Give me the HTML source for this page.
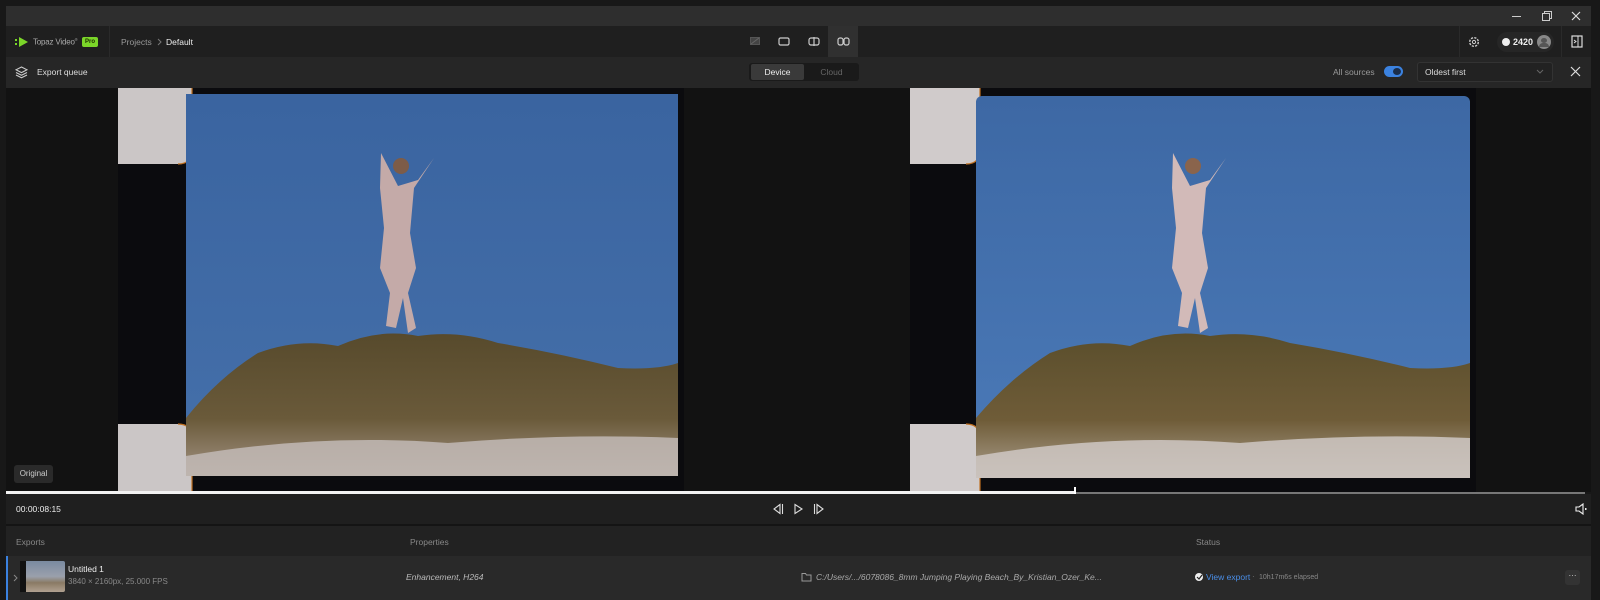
<!DOCTYPE html>
<html><head><meta charset="utf-8"><style>
*{margin:0;padding:0;box-sizing:border-box}
body{width:1600px;height:600px;background:#181818;font-family:"Liberation Sans",sans-serif;color:#ddd;position:relative;overflow:hidden;font-size:9px}
.a{position:absolute}
svg{display:block}
</style></head><body>
<div class="a" style="left:6px;top:6px;width:1585px;height:20px;background:#2e2e2e"></div>
<div class="a" style="left:1512px;top:16px;width:9px;height:1px;background:#ccc"></div>
<svg class="a" style="left:1542px;top:11px" width="10" height="10"><rect x="0.5" y="2.5" width="7" height="7" fill="none" stroke="#ccc"/><path d="M2.5 2.5V0.5H9.5V7.5H7.5" fill="none" stroke="#ccc"/></svg>
<svg class="a" style="left:1571px;top:11px" width="10" height="10"><path d="M1 1L9 9M9 1L1 9" stroke="#ddd" stroke-width="1.2"/></svg>
<div class="a" style="left:6px;top:26px;width:1585px;height:31px;background:#1f1f1f"></div>
<div class="a" style="left:109px;top:26px;width:1px;height:31px;background:#2a2a2a"></div>
<svg class="a" style="left:15px;top:36px" width="14" height="12"><rect x="0" y="3" width="2" height="2" fill="#7bd629"/><rect x="0" y="7" width="2" height="2" fill="#7bd629"/><path d="M4 1L13 6L4 11Z" fill="#7bd629"/></svg>
<div class="a" style="left:33px;top:37px;font-size:8px;letter-spacing:-0.2px;color:#aaa">Topaz Video<sup style="font-size:4px">®</sup></div>
<div class="a" style="left:82px;top:37px;width:16px;height:10px;background:#7bd629;border-radius:2px;color:#1a2a00;font-size:6px;font-weight:bold;text-align:center;line-height:10px">Pro</div>
<div class="a" style="left:121px;top:37px;font-size:8.5px;color:#999">Projects</div>
<svg class="a" style="left:157px;top:38px" width="6" height="8"><path d="M1 1L4 4L1 7" fill="none" stroke="#777"/></svg>
<div class="a" style="left:166px;top:37px;font-size:8.5px;color:#eee">Default</div>
<div class="a" style="left:828px;top:26px;width:30px;height:31px;background:#303030"></div>
<svg class="a" style="left:749px;top:36px" width="12" height="10"><rect x="1.5" y="1.5" width="9" height="7" fill="#444" stroke="#555"/><path d="M2 8L10 2" stroke="#666"/></svg>
<svg class="a" style="left:778px;top:36px" width="12" height="10"><rect x="1" y="2" width="10" height="7" rx="1.5" fill="none" stroke="#ccc" stroke-width="1.2"/></svg>
<svg class="a" style="left:808px;top:36px" width="12" height="10"><rect x="1" y="2" width="10" height="7" rx="2" fill="none" stroke="#ccc" stroke-width="1.2"/><path d="M6 1V10" stroke="#ccc" stroke-width="1.2"/></svg>
<svg class="a" style="left:837px;top:36px" width="13" height="10"><rect x="1" y="2" width="5" height="7" rx="2" fill="none" stroke="#ccc" stroke-width="1.2"/><rect x="7" y="2" width="5" height="7" rx="2" fill="none" stroke="#ccc" stroke-width="1.2"/></svg>
<div class="a" style="left:1459px;top:26px;width:1px;height:31px;background:#2a2a2a"></div>
<div class="a" style="left:1561px;top:26px;width:1px;height:31px;background:#2a2a2a"></div>
<svg class="a" style="left:1468px;top:36px" width="12" height="12"><circle cx="6" cy="6" r="4.3" fill="none" stroke="#ccc" stroke-width="1.4" stroke-dasharray="2.2 1.2"/><circle cx="6" cy="6" r="1.6" fill="none" stroke="#ccc"/></svg>
<div class="a" style="left:1497px;top:32px;width:57px;height:20px;background:#262626;border-radius:10px"></div>
<div class="a" style="left:1502px;top:38px;width:8px;height:8px;border-radius:50%;background:#eee"></div>
<div class="a" style="left:1513px;top:37px;font-size:9px;font-weight:bold;color:#eee">2420</div>
<div class="a" style="left:1537px;top:35px;width:14px;height:14px;border-radius:50%;background:#888"></div>
<div class="a" style="left:1541px;top:38px;width:6px;height:5px;border-radius:50%;background:#555"></div>
<div class="a" style="left:1539px;top:43px;width:10px;height:4px;border-radius:4px 4px 0 0;background:#555"></div>
<svg class="a" style="left:1571px;top:35px" width="12" height="13"><rect x="1" y="1" width="10" height="11" fill="none" stroke="#ddd" stroke-width="1.2"/><path d="M7 1V12M3 5L5 6.5L3 8" fill="none" stroke="#ddd"/></svg>
<div class="a" style="left:6px;top:57px;width:1585px;height:31px;background:#262626"></div>
<svg class="a" style="left:15px;top:66px" width="13" height="13"><path d="M6.5 1L12 3.8L6.5 6.6L1 3.8Z M1 6.5L6.5 9.3L12 6.5 M1 9L6.5 11.8L12 9" fill="none" stroke="#ccc" stroke-width="1.1"/></svg>
<div class="a" style="left:37px;top:67px;font-size:8.5px;color:#ddd">Export queue</div>
<div class="a" style="left:749px;top:63px;width:110px;height:18px;background:#1a1a1a;border-radius:3px"></div>
<div class="a" style="left:751px;top:64px;width:53px;height:16px;background:#3a3a3a;border-radius:2px;font-size:8.5px;color:#eee;text-align:center;line-height:16px">Device</div>
<div class="a" style="left:805px;top:64px;width:53px;height:16px;font-size:8.5px;color:#666;text-align:center;line-height:16px">Cloud</div>
<div class="a" style="left:1333px;top:67px;font-size:8.5px;color:#999">All sources</div>
<div class="a" style="left:1384px;top:66px;width:19px;height:11px;border-radius:6px;background:#3b82e0"></div>
<div class="a" style="left:1393px;top:68px;width:8px;height:7px;border-radius:50%;background:#1a2d4a"></div>
<div class="a" style="left:1417px;top:62px;width:136px;height:20px;border:1px solid #333;background:#222;border-radius:3px"></div>
<div class="a" style="left:1425px;top:67px;font-size:8.5px;color:#ddd">Oldest first</div>
<svg class="a" style="left:1536px;top:69px" width="8" height="6"><path d="M1 1L4 4L7 1" fill="none" stroke="#666"/></svg>
<svg class="a" style="left:1570px;top:66px" width="11" height="11"><path d="M1 1L10 10M10 1L1 10" stroke="#ddd" stroke-width="1.2"/></svg>
<div class="a" style="left:6px;top:88px;width:1585px;height:404px;background:#121212"></div>
<svg class="a" style="left:118px;top:88px" width="570" height="404" viewBox="0 0 570 404">
<defs><linearGradient id="s1" x1="0" y1="0" x2="0" y2="1"><stop offset="0" stop-color="#3a64a0"/><stop offset="1" stop-color="#4570aa"/></linearGradient>
<linearGradient id="m1" x1="0" y1="0" x2="0" y2="1"><stop offset="0" stop-color="#574a2c"/><stop offset=".6" stop-color="#6a5a3a"/><stop offset="1" stop-color="#a49484"/></linearGradient></defs>
<rect x="0" y="0" width="566" height="404" fill="#0b0b0e"/>
<path d="M0 0H74V62Q74 76 60 76H0Z" fill="#cbc6c6"/><path d="M74 0V62Q74 76 60 76" fill="none" stroke="#c07020" stroke-width="1.2"/>
<path d="M0 404V336H60Q74 336 74 350V404Z" fill="#cbc6c6"/><path d="M60 336Q74 336 74 350V404" fill="none" stroke="#c07020" stroke-width="1.2"/>
<rect x="68" y="6" width="492" height="382" fill="url(#s1)"/>
<path d="M68 330Q100 290 140 265Q180 250 220 258Q260 240 300 248Q340 242 380 255Q440 265 500 280Q540 282 560 275V388H68Z" fill="url(#m1)"/>
<path d="M68 368Q200 345 330 355Q450 345 560 350V388H68Z" fill="#c2bab6" opacity=".85"/>
<path d="M263 65L280 98L300 92L316 70L296 100L292 145L298 180L290 205L298 240L290 245L285 210L278 240L268 238L272 205L262 180L266 140L262 100Z" fill="#c4aaa8"/>
<circle cx="283" cy="78" r="8" fill="#7d5c48"/>
</svg>
<svg class="a" style="left:910px;top:88px" width="570" height="404" viewBox="0 0 570 404">
<defs><linearGradient id="s2" x1="0" y1="0" x2="0" y2="1"><stop offset="0" stop-color="#3d68a4"/><stop offset="1" stop-color="#4b7ab8"/></linearGradient>
<linearGradient id="m2" x1="0" y1="0" x2="0" y2="1"><stop offset="0" stop-color="#5a4e2c"/><stop offset=".6" stop-color="#6f5c38"/><stop offset="1" stop-color="#aca08e"/></linearGradient></defs>
<rect x="0" y="0" width="566" height="404" fill="#0b0b0e"/>
<path d="M0 0H70V62Q70 76 56 76H0Z" fill="#d0cbcb"/><path d="M70 0V62Q70 76 56 76" fill="none" stroke="#c07020" stroke-width="1.2"/>
<path d="M0 404V336H56Q70 336 70 350V404Z" fill="#d0cbcb"/><path d="M56 336Q70 336 70 350V404" fill="none" stroke="#c07020" stroke-width="1.2"/>
<rect x="66" y="8" width="494" height="382" rx="6" fill="url(#s2)"/>
<path d="M66 330Q100 290 140 265Q180 250 220 258Q260 240 300 248Q340 242 380 255Q440 265 500 280Q540 282 560 275V390H66Z" fill="url(#m2)"/>
<path d="M66 368Q200 345 330 355Q450 345 560 350V390H66Z" fill="#cfc8c4" opacity=".85"/>
<path d="M263 65L280 98L300 92L316 70L296 100L292 145L298 180L290 205L298 240L290 245L285 210L278 240L268 238L272 205L262 180L266 140L262 100Z" fill="#d2bab8"/>
<circle cx="283" cy="78" r="8" fill="#8a644c"/>
</svg>
<div class="a" style="left:14px;top:465px;width:39px;height:18px;background:#2a2a2a;border-radius:3px;font-size:8px;color:#ccc;text-align:center;line-height:18px">Original</div>
<div class="a" style="left:6px;top:491px;width:1069px;height:3px;background:#f2f2f2"></div>
<div class="a" style="left:1075px;top:492px;width:510px;height:2px;background:#777"></div>
<div class="a" style="left:1074px;top:487px;width:2px;height:11px;background:#fff"></div>
<div class="a" style="left:6px;top:494px;width:1585px;height:30px;background:#1f1f1f"></div>
<div class="a" style="left:16px;top:504px;font-size:8.5px;color:#eee">00:00:08:15</div>
<svg class="a" style="left:772px;top:503px" width="56" height="12"><path d="M8 1.5L2 6L8 10.5Z" fill="none" stroke="#ddd" stroke-width="1.1"/><path d="M10.5 1V11" stroke="#ddd" stroke-width="1.1"/><path d="M23 1.5L30 6L23 10.5Z" fill="none" stroke="#ddd" stroke-width="1.1"/><path d="M42.5 1V11" stroke="#ddd" stroke-width="1.1"/><path d="M45 1.5L51 6L45 10.5Z" fill="none" stroke="#ddd" stroke-width="1.1"/></svg>
<svg class="a" style="left:1575px;top:503px" width="12" height="12"><path d="M1 4H4L8 1V11L4 8H1Z" fill="none" stroke="#eee" stroke-width="1.1"/><rect x="10" y="5" width="1.5" height="2" fill="#eee"/></svg>
<div class="a" style="left:6px;top:524px;width:1585px;height:2px;background:#141414"></div>
<div class="a" style="left:6px;top:526px;width:1585px;height:30px;background:#222"></div>
<div class="a" style="left:16px;top:537px;font-size:8.5px;color:#888">Exports</div>
<div class="a" style="left:410px;top:537px;font-size:8.5px;color:#888">Properties</div>
<div class="a" style="left:1196px;top:537px;font-size:8.5px;color:#888">Status</div>
<div class="a" style="left:6px;top:556px;width:1585px;height:44px;background:#292929"></div>
<div class="a" style="left:6px;top:556px;width:2px;height:44px;background:#3b82e0"></div>
<svg class="a" style="left:13px;top:574px" width="6" height="8"><path d="M1 1L4 4L1 7" fill="none" stroke="#888"/></svg>
<div class="a" style="left:20px;top:561px;width:45px;height:31px;border-radius:2px;background:linear-gradient(#7a8aa0 0%,#9aa0ac 50%,#8a7a64 70%,#b0a090 100%)"></div>
<div class="a" style="left:20px;top:561px;width:6px;height:31px;background:#111"></div>
<div class="a" style="left:68px;top:564px;font-size:8.5px;color:#eee">Untitled 1</div>
<div class="a" style="left:68px;top:577px;font-size:8px;color:#888">3840 × 2160px, 25.000 FPS</div>
<div class="a" style="left:406px;top:572px;font-size:8.5px;color:#bbb;font-style:italic">Enhancement, H264</div>
<svg class="a" style="left:801px;top:572px" width="11" height="10"><path d="M1 1.5H4.5L5.5 3H10V9H1Z" fill="none" stroke="#999"/></svg>
<div class="a" style="left:816px;top:572px;font-size:8.5px;color:#aaa;font-style:italic">C:/Users/.../6078086_8mm Jumping Playing Beach_By_Kristian_Ozer_Ke...</div>
<div class="a" style="left:1195px;top:573px;width:8px;height:8px;border-radius:50%;background:#eee"></div>
<svg class="a" style="left:1196px;top:574px" width="7" height="6"><path d="M1 3L3 5L6 1" fill="none" stroke="#222" stroke-width="1.2"/></svg>
<div class="a" style="left:1206px;top:572px;font-size:8.5px;color:#4a8ee8">View export</div>
<div class="a" style="left:1252px;top:572px;font-size:8px;color:#777">·</div>
<div class="a" style="left:1259px;top:574px;font-size:7px;color:#888">10h17m6s elapsed</div>
<div class="a" style="left:1565px;top:570px;width:15px;height:15px;background:#333;border-radius:3px;color:#ddd;font-size:8px;text-align:center;line-height:12px">···</div>
</body></html>
